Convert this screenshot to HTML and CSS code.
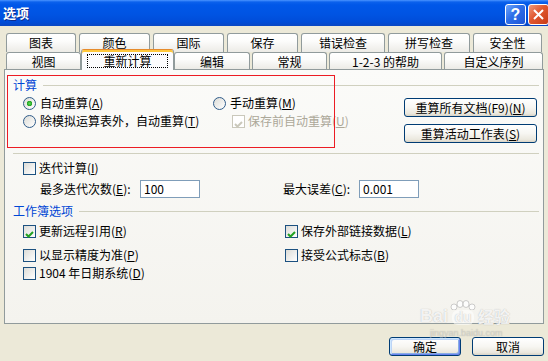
FILE: index.html
```html
<!DOCTYPE html>
<html lang="zh-CN">
<head>
    <meta charset="UTF-8">
    <title>选项</title>
    <link rel="stylesheet" href="styles.css">
</head>
<body>

    <div id="dialog">

        <!--  Başlık çubuğu  -->
        <div class="titlebar">
            <span class="title">选项</span>
            <div class="caption-btns">
                <span class="cap-btn help">?</span>
                <span class="cap-btn close">
                    <svg width="13" height="13" viewBox="0 0 13 13"><path d="M2 2 L11 11 M11 2 L2 11" stroke="#fff" stroke-width="2" fill="none"/></svg>
                </span>
            </div>
        </div>

        <div class="client">

            <!--  Sekmeler  -->
            <div class="tabs">
                <div class="tab-row back">
                    <span class="tab">图表</span>
                    <span class="tab">颜色</span>
                    <span class="tab">国际</span>
                    <span class="tab">保存</span>
                    <span class="tab">错误检查</span>
                    <span class="tab">拼写检查</span>
                    <span class="tab">安全性</span>
                </div>
                <div class="tab-row front">
                    <span class="tab">视图</span>
                    <span class="tab selected"><span class="focus">重新计算</span></span>
                    <span class="tab">编辑</span>
                    <span class="tab">常规</span>
                    <span class="tab">1-2-3 的帮助</span>
                    <span class="tab">自定义序列</span>
                </div>
            </div>

            <!--  Sekme sayfası  -->
            <div class="page">
                <div class="group-head">计算</div>

                <div class="calc">
                    <div class="calc-opts">
                        <div class="opt"><span class="radio on"></span>自动重算(<u>A</u>)</div>
                        <div class="opt"><span class="radio"></span>手动重算(<u>M</u>)</div>
                        <div class="opt"><span class="radio"></span>除模拟运算表外，自动重算(<u>T</u>)</div>
                        <div class="opt sub disabled">
                            <span class="check on dis"><svg width="11" height="11" viewBox="0 0 11 11"><path d="M2 5 L4.5 7.5 L9 3" stroke="#cac8bb" stroke-width="2" fill="none"/></svg></span>保存前自动重算(<u>U</u>)
                        </div>
                    </div>
                    <div class="calc-btns">
                        <span class="btn wide">重算所有文档(F9)(<u>N</u>)</span>
                        <span class="btn wide">重算活动工作表(<u>S</u>)</span>
                    </div>
                </div>

                <div class="sep"></div>

                <div class="opt iter"><span class="check"></span>迭代计算(<u>I</u>)</div>

                <div class="fields">
                    <span class="field-label">最多迭代次数(<u>E</u>):</span>
                    <span class="num">100</span>
                    <span class="field-label second">最大误差(<u>C</u>):</span>
                    <span class="num">0.001</span>
                </div>

                <div class="group-head book">工作簿选项</div>

                <div class="book-opts">
                    <div class="opt"><span class="check on"><svg width="11" height="11" viewBox="0 0 11 11"><path d="M2 5 L4.5 7.5 L9 3" stroke="#21a121" stroke-width="2" fill="none"/></svg></span>更新远程引用(<u>R</u>)</div>
                    <div class="opt"><span class="check on"><svg width="11" height="11" viewBox="0 0 11 11"><path d="M2 5 L4.5 7.5 L9 3" stroke="#21a121" stroke-width="2" fill="none"/></svg></span>保存外部链接数据(<u>L</u>)</div>
                    <div class="opt"><span class="check"></span>以显示精度为准(<u>P</u>)</div>
                    <div class="opt"><span class="check"></span>接受公式标志(<u>B</u>)</div>
                    <div class="opt"><span class="check"></span>1904 年日期系统(<u>D</u>)</div>
                </div>

                <!--  Kırmızı işaret kutusu  -->
                <div class="mark"></div>
            </div>

            <div class="footer">
                <span class="btn default">确定</span>
                <span class="btn">取消</span>
            </div>
        </div>

        <!--  Filigran  -->
        <div class="watermark">
            <div class="wm-logo">
                <span>Bai</span>
                <span class="paw">
                    <svg width="26" height="10" viewBox="0 0 26 10">
                        <ellipse cx="4" cy="7" rx="3" ry="3" fill="rgba(255,255,255,.8)" stroke="rgba(120,120,120,.35)"/>
                        <ellipse cx="10" cy="4" rx="3" ry="3.5" fill="rgba(255,255,255,.8)" stroke="rgba(120,120,120,.35)"/>
                        <ellipse cx="16" cy="4" rx="3" ry="3.5" fill="rgba(255,255,255,.8)" stroke="rgba(120,120,120,.35)"/>
                        <ellipse cx="22" cy="7" rx="3" ry="3" fill="rgba(255,255,255,.8)" stroke="rgba(120,120,120,.35)"/>
                    </svg>
                    <span class="du">du</span>
                </span>
                <span class="wm-cn">经验</span>
            </div>
            <div class="wm-url">jingyan.baidu.com</div>
        </div>

    </div>

</body>
</html>
```

FILE: styles.css
```css
* {
    margin: 0;
    padding: 0;
    box-sizing: border-box;
}

html,
body {
    width: 548px;
    height: 361px;
    overflow: hidden;
}

body {
    font-family: "Noto Sans CJK SC", "Liberation Sans", sans-serif;
    font-size: 12px;
    line-height: 18px;
    color: #000;
    background-color: #ece9d8;
}

#dialog {
    position: relative;
    height: 361px;
}

/* title bar */

.titlebar {
    display: flex;
    justify-content: space-between;
    height: 26px;
    padding-left: 3px;
    background-image: linear-gradient(to bottom, #4a94ff 0, #0b61ec 2px, #0057e8 5px, #0054e3 55%, #004cd8 85%, #0a47c2 100%);
}

.title {
    color: #fff;
    font-weight: bold;
    font-size: 13px;
    line-height: 26px;
    text-shadow: 1px 1px 0 #0d2d8f;
}

.caption-btns {
    display: flex;
    gap: 2px;
    margin-top: 4px;
    margin-right: -1px;
}

.cap-btn {
    display: flex;
    align-items: center;
    justify-content: center;
    width: 21px;
    height: 21px;
    border: 1px solid #fff;
    border-radius: 3px;
    color: #fff;
}

.cap-btn.help {
    font-family: "Liberation Sans", sans-serif;
    font-weight: bold;
    font-size: 16px;
    background-image: linear-gradient(135deg, #6ea4fb, #2e6ee8 45%, #1f56d6);
}

.cap-btn.close {
    background-image: linear-gradient(135deg, #f09a7c, #e0572f 45%, #c83b17);
}

/* client area */

.client {
    padding: 7px 4px 0 4px;
}

.tab-row {
    display: flex;
    padding-left: 2px;
}

.tab-row.back {
    gap: 3px;
    height: 19px;
}

.tab-row.front {
    gap: 2px;
    height: 17px;
    align-items: flex-end;
}

.tab {
    flex: none;
    height: 100%;
    border: 1px solid #919b9c;
    border-bottom: 0;
    border-radius: 3px 3px 0 0;
    background-image: linear-gradient(#fff, #fcfcfb 40%, #ecebe6);
    text-align: center;
    line-height: 17px;
}

.back .tab:nth-child(1) { width: 70px; }
.back .tab:nth-child(2),
.back .tab:nth-child(3),
.back .tab:nth-child(4) { width: 71px; }
.back .tab:nth-child(5) { width: 84px; }
.back .tab:nth-child(6) { width: 82px; }
.back .tab:nth-child(7) { width: 69px; }

.front .tab:nth-child(1) { width: 75px; }
.front .tab:nth-child(3) { width: 76px; }
.front .tab:nth-child(4) { width: 75px; }
.front .tab:nth-child(5) { width: 113px; }
.front .tab:nth-child(6) { width: 99px; }

.tab.selected {
    position: relative;
    z-index: 1;
    width: 93px;
    height: 21px;
    margin: 0 -2px -1px -2px;
    padding-top: 2px;
    border-top-color: #e68b2c;
    background: #fcfcfe;
    box-shadow: inset 0 2px 0 #ffc83c;
}

.focus {
    display: inline-block;
    padding: 0 15px;
    line-height: 12px;
    height: 14px;
    border: 1px dotted #000;
}

/* tab page */

.page {
    position: relative;
    height: 255px;
    padding: 8px 4px 0 8px;
    border: 1px solid #919b9c;
    background-image: linear-gradient(#fbfbf9, #f4f3ee);
}

.group-head {
    display: flex;
    align-items: center;
    height: 14px;
    line-height: 14px;
    color: #0046d5;
}

.group-head::after {
    content: "";
    flex-grow: 1;
    margin-left: 6px;
    border-top: 1px solid #d0d0bf;
}

.calc {
    display: flex;
    margin-top: 2px;
}

.calc-opts {
    display: grid;
    grid-template-columns: 190px auto;
    grid-auto-rows: 18px;
    padding-left: 10px;
}

.calc-btns {
    display: flex;
    flex-direction: column;
    gap: 7px;
    margin-left: auto;
    margin-right: 2px;
    padding-top: 4px;
}

.opt {
    display: flex;
    align-items: center;
    height: 18px;
    white-space: nowrap;
}

.opt.sub {
    padding-left: 19px;
}

.opt.disabled {
    color: #aca899;
}

.radio,
.check {
    flex: none;
    width: 13px;
    height: 13px;
    margin-right: 4px;
    border: 1px solid #1c5180;
    background-image: linear-gradient(135deg, #dcdcd7, #fff);
}

.check {
    margin-right: 3px;
}

.check.dis {
    border-color: #cac8bb;
    background: #fff;
}

.radio {
    border-radius: 50%;
    border-color: #2f5c8a;
}

.radio.on {
    background-image: radial-gradient(circle, #5fdc5a 0, #21a121 2.5px, transparent 3px), linear-gradient(135deg, #dcdcd7, #fff);
}

.sep {
    margin-top: 10px;
    border-top: 1px solid #d0d0bf;
}

.opt.iter {
    margin-top: 5px;
    padding-left: 10px;
}

.fields {
    display: flex;
    align-items: center;
    height: 18px;
    margin-top: 3px;
    padding-left: 27px;
}

.field-label {
    width: 100px;
}

.field-label.second {
    width: 76px;
    margin-left: 83px;
}

.num {
    width: 60px;
    height: 18px;
    padding-left: 3px;
    border: 1px solid #7f9db9;
    background: #fff;
    line-height: 16px;
}

.group-head.book {
    margin-top: 6px;
}

.book-opts {
    display: grid;
    grid-template-columns: 262px auto;
    grid-template-rows: 24px 18px 18px;
    margin-top: 4px;
    padding-left: 10px;
}

.mark {
    position: absolute;
    left: 2px;
    top: 5px;
    width: 328px;
    height: 73px;
    border: 1px solid #ec1c24;
}

/* buttons */

.btn {
    display: block;
    height: 19px;
    border: 1px solid #003c74;
    border-radius: 3px;
    background-image: linear-gradient(#fff, #f7f6f2 50%, #ebe8de 85%, #d8d3c6);
    text-align: center;
    line-height: 17px;
    white-space: nowrap;
}

.btn.wide {
    width: 133px;
}

.footer {
    display: flex;
    justify-content: flex-end;
    gap: 11px;
    margin-top: 13px;
}

.footer .btn {
    width: 72px;
}

.btn.default {
    box-shadow: inset 1px 1px 0 #cee7ff, inset -1px -1px 0 #6982ee, inset 2px 2px 0 #bcd4f6, inset -2px -2px 0 #89ade4;
}

/* watermark */

.watermark {
    position: absolute;
    left: 420px;
    top: 300px;
    color: rgba(255, 255, 255, .85);
    text-shadow: 0 0 1px rgba(90, 90, 90, .45);
}

.wm-logo {
    display: flex;
    align-items: flex-end;
    font-family: "Liberation Sans", sans-serif;
    font-weight: bold;
    font-size: 18px;
    line-height: 18px;
}

.paw {
    display: flex;
    flex-direction: column;
    align-items: center;
    margin: 0 2px;
}

.du {
    padding: 0 2px;
    border-radius: 6px;
    background: rgba(255, 255, 255, .55);
    font-size: 14px;
    line-height: 15px;
}

.wm-cn {
    font-family: "Noto Sans CJK SC", sans-serif;
    font-size: 16px;
}

.wm-url {
    margin-top: 3px;
    padding-left: 10px;
    font-family: "Liberation Sans", sans-serif;
    font-size: 9px;
    line-height: 10px;
    color: rgba(255, 255, 255, .35);
}
```
